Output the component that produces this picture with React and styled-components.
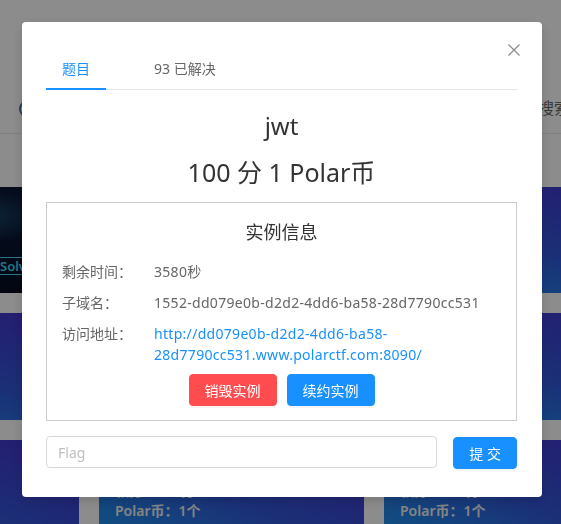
import React from "react";
import styled, { createGlobalStyle } from "styled-components";

const GlobalStyle = createGlobalStyle`
  html, body {
    margin: 0;
    padding: 0;
  }
  body {
    font-family: "Noto Sans", "Noto Sans CJK SC", sans-serif;
    background: #fff;
    overflow: hidden;
  }
  * {
    box-sizing: border-box;
  }
`;

const instance = {
    remaining: "3580秒",
    subdomain: "1552-dd079e0b-d2d2-4dd6-ba58-28d7790cc531",
    urlHead: "http://dd079e0b-d2d2-4dd6-ba58-",
    urlTail: "28d7790cc531.www.polarctf.com:8090/",
};

const App = () => {
    return (
        <>
            <GlobalStyle />
            <Page>
                <Header>
                    <LogoRing />
                    <SearchText>搜索</SearchText>
                </Header>
                <CardGrid>
                    <ImageCard>
                        <SolvedBadge>Solved</SolvedBadge>
                    </ImageCard>
                    <Card />
                    <Card />
                    <Card />
                    <Card />
                    <Card />
                    <Card />
                    {[0, 1].map((i) => (
                        <Card key={`card-${i}`}>
                            <CardTitle>Web</CardTitle>
                            <CardLine>积分：100分</CardLine>
                            <CardLine>Polar币：1个</CardLine>
                            <CardLine>解出人数：93</CardLine>
                        </Card>
                    ))}
                </CardGrid>
            </Page>

            <Mask />
            <DialogWrap>
                <Dialog role="dialog" aria-label="jwt">
                    <CloseButton aria-label="close">
                        <svg width="12" height="12" viewBox="0 0 12 12">
                            <path d="M0.5 0.5 L11.5 11.5 M11.5 0.5 L0.5 11.5" stroke="#8c8c8c" strokeWidth="1.3" fill="none" />
                        </svg>
                    </CloseButton>

                    <TabNav>
                        <Tab active>题目</Tab>
                        <Tab>93 已解决</Tab>
                    </TabNav>

                    <ChallengeName>jwt</ChallengeName>
                    <Score>100 分 1 Polar币</Score>

                    <InstanceBox>
                        <InstanceTitle>实例信息</InstanceTitle>
                        <InfoRow>
                            <InfoLabel>剩余时间：</InfoLabel>
                            <InfoValue>{instance.remaining}</InfoValue>
                        </InfoRow>
                        <InfoRow>
                            <InfoLabel>子域名：</InfoLabel>
                            <InfoValue>{instance.subdomain}</InfoValue>
                        </InfoRow>
                        <InfoRow>
                            <InfoLabel>访问地址：</InfoLabel>
                            <InfoLink href="#">
                                {instance.urlHead}
                                <wbr />
                                {instance.urlTail}
                            </InfoLink>
                        </InfoRow>
                        <ButtonRow>
                            <ActionButton danger>销毁实例</ActionButton>
                            <ActionButton>续约实例</ActionButton>
                        </ButtonRow>
                    </InstanceBox>

                    <FlagRow>
                        <FlagInput placeholder="Flag" />
                        <SubmitButton>提 交</SubmitButton>
                    </FlagRow>
                </Dialog>
            </DialogWrap>
        </>
    );
};

/* page behind the modal */

const Page = styled.div`
    width: 561px;
    height: 524px;
    overflow: hidden;
    background: #fff;
`;

const Header = styled.header`
    height: 134px;
    border-bottom: 1px solid #e8e8e8;
    display: flex;
    align-items: flex-end;
    padding-bottom: 15px;
`;

const LogoRing = styled.div`
    width: 18px;
    height: 18px;
    margin-left: 19px;
    border: 2px solid #4b6ea8;
    border-radius: 50%;
`;

const SearchText = styled.span`
    margin-left: auto;
    margin-right: -9px;
    font-size: 16px;
    line-height: 20px;
    color: #666;
`;

const CardGrid = styled.div`
    display: grid;
    grid-template-columns: repeat(3, 265px);
    grid-template-rows: 106px 107px 120px;
    gap: 20px;
    margin: 53px 0 0 -186px;
`;

const Card = styled.div`
    background: linear-gradient(to top right, #17a6f5 0%, #3157d9 50%, #472dca 100%);
    padding: 14px 16px;
    color: #fff;
`;

const ImageCard = styled.div`
    position: relative;
    background:
        radial-gradient(ellipse 120px 40px at 150px 30px, rgba(60, 200, 240, 0.35), transparent 70%),
        linear-gradient(180deg, #0b1738 0%, #09122c 70%, #060c20 100%);
`;

const SolvedBadge = styled.span`
    position: absolute;
    left: 182px;
    top: 70px;
    padding: 0 4px;
    border-top: 1px solid #41d9f5;
    border-bottom: 1px solid #41d9f5;
    font-size: 13px;
    line-height: 16px;
    font-weight: 600;
    color: #41d9f5;
`;

const CardTitle = styled.div`
    font-size: 18px;
    line-height: 27px;
    font-weight: 600;
`;

const CardLine = styled.div`
    font-size: 14px;
    line-height: 20px;
    font-weight: 600;
    color: #f0f0f0;
`;

/* modal */

const Mask = styled.div`
    position: fixed;
    inset: 0;
    background: rgba(0, 0, 0, 0.45);
`;

const DialogWrap = styled.div`
    position: fixed;
    inset: 0;
    display: flex;
    align-items: flex-start;
    padding: 22px 0 0 22px;
`;

const Dialog = styled.div`
    position: relative;
    width: 520px;
    background: #fff;
    border-radius: 4px;
    padding: 25px 25px 28px 24px;
    box-shadow: 0 4px 12px rgba(0, 0, 0, 0.15);
`;

const CloseButton = styled.button`
    position: absolute;
    top: 22px;
    right: 22px;
    width: 12px;
    height: 12px;
    padding: 0;
    border: none;
    background: none;
    display: flex;
`;

const TabNav = styled.div`
    display: flex;
    border-bottom: 1px solid #e8e8e8;
`;

const Tab = styled.div`
    position: relative;
    padding: 12px 16px 10px;
    margin-right: 32px;
    font-size: 14px;
    line-height: 20px;
    color: ${({ active }) => (active ? "#1890ff" : "#666")};

    &::after {
        content: "";
        display: ${({ active }) => (active ? "block" : "none")};
        position: absolute;
        left: 0;
        right: 0;
        bottom: -1px;
        height: 2px;
        background: #1890ff;
    }
`;

const ChallengeName = styled.h2`
    margin: 18px 0 0;
    font-size: 24px;
    line-height: 36px;
    font-weight: 400;
    text-align: center;
    color: #333;
`;

const Score = styled.div`
    margin-top: 10px;
    font-size: 25px;
    line-height: 36px;
    text-align: center;
    color: #333;
`;

const InstanceBox = styled.div`
    margin-top: 12px;
    border: 1px solid #ccc;
    padding: 16px 15px 14px;
    display: flex;
    flex-direction: column;
    gap: 10px;
`;

const InstanceTitle = styled.h3`
    margin: 0 0 5px;
    font-size: 18px;
    line-height: 27px;
    font-weight: 400;
    text-align: center;
    color: #333;
`;

const InfoRow = styled.div`
    display: grid;
    grid-template-columns: 92px 1fr;
    font-size: 14px;
    line-height: 21px;
    color: #666;
`;

const InfoLabel = styled.span``;

const InfoValue = styled.span`
    letter-spacing: 0.3px;
`;

const InfoLink = styled.a`
    color: #1890ff;
    text-decoration: none;
    letter-spacing: 0.3px;
`;

const ButtonRow = styled.div`
    display: flex;
    justify-content: center;
    gap: 10px;
    margin-top: -1px;
`;

const ActionButton = styled.button`
    height: 32px;
    padding: 0 15px;
    border: 1px solid ${({ danger }) => (danger ? "#ff4d4f" : "#1890ff")};
    border-radius: 4px;
    background: ${({ danger }) => (danger ? "#ff4d4f" : "#1890ff")};
    color: #fff;
    font-family: inherit;
    font-size: 14px;
    box-shadow: 0 2px 0 rgba(0, 0, 0, 0.045);
`;

const FlagRow = styled.div`
    display: flex;
    gap: 16px;
    margin-top: 15px;
`;

const FlagInput = styled.input`
    flex: 1;
    height: 32px;
    padding: 4px 11px;
    border: 1px solid #d9d9d9;
    border-radius: 4px;
    font-family: inherit;
    font-size: 14px;
    color: #333;
    outline: none;

    &::placeholder {
        color: #bfbfbf;
    }
`;

const SubmitButton = styled.button`
    height: 32px;
    margin-top: 1px;
    padding: 0 15px;
    border: 1px solid #1890ff;
    border-radius: 4px;
    background: #1890ff;
    color: #fff;
    font-family: inherit;
    font-size: 14px;
    box-shadow: 0 2px 0 rgba(0, 0, 0, 0.045);
`;

export default App;
